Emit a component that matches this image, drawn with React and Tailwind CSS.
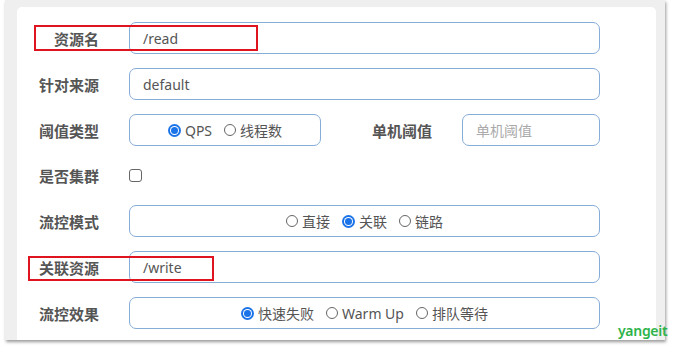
import React from 'react';

const fontStack = { fontFamily: '"Noto Sans", "Noto Sans CJK SC", sans-serif' };

function Radio({ checked, label }) {
  return (
    <span className="flex items-center gap-[4px]">
      {checked ? (
        <span className="w-[13px] h-[13px] rounded-full bg-[#1a73e8] flex items-center justify-center">
          <span className="w-[9px] h-[9px] rounded-full bg-white flex items-center justify-center">
            <span className="w-[7px] h-[7px] rounded-full bg-[#1a73e8]"></span>
          </span>
        </span>
      ) : (
        <span className="w-[12px] h-[12px] rounded-full border border-[#666] bg-white"></span>
      )}
      <span>{label}</span>
    </span>
  );
}

function Label({ children, className = '' }) {
  return (
    <div className={`text-right font-bold text-[15px] text-[#555] leading-none pt-[2px] ${className}`}>{children}</div>
  );
}

function Box({ children, className = '' }) {
  return (
    <div className={`h-[32px] rounded-[7px] border border-[#86acd8] bg-white flex items-center text-[14px] text-[#555] ${className}`}>
      {children}
    </div>
  );
}

export default function App() {
  return (
    <div className="w-[673px] h-[350px] bg-white relative overflow-hidden" style={fontStack}>
      <div className="ml-[5px] w-[660px] h-[340px] bg-[#efefef] pl-[12px] pr-[9px] pt-[7px] shadow-[1px_2px_3px_rgba(0,0,0,0.4)]">
        <div className="h-full bg-white rounded-t-[5px] pt-[15px]">
          <div className="flex flex-col gap-[14px]">
            {/* 资源名 */}
            <div className="flex items-center">
              <Label className="w-[82px]">资源名</Label>
              <Box className="ml-[30px] w-[471px] px-[13px]">/read</Box>
            </div>
            {/* 针对来源 */}
            <div className="flex items-center">
              <Label className="w-[82px]">针对来源</Label>
              <Box className="ml-[30px] w-[471px] px-[13px]">default</Box>
            </div>
            {/* 阈值类型 */}
            <div className="flex items-center">
              <Label className="w-[82px]">阈值类型</Label>
              <Box className="ml-[30px] w-[192px] justify-center gap-[12px] text-[14.5px]">
                <Radio checked label="QPS" />
                <Radio label="线程数" />
              </Box>
              <Label className="w-[111px]">单机阈值</Label>
              <Box className="ml-[30px] w-[138px] px-[13px] text-[#aaa]">单机阈值</Box>
            </div>
            {/* 是否集群 */}
            <div className="flex items-center h-[31px]">
              <Label className="w-[82px]">是否集群</Label>
              <span className="ml-[30px] w-[13px] h-[13px] rounded-[3px] border border-[#666] bg-white"></span>
            </div>
            {/* 流控模式 */}
            <div className="flex items-center">
              <Label className="w-[82px]">流控模式</Label>
              <Box className="ml-[30px] w-[471px] justify-center gap-[12px] text-[14.5px]">
                <Radio label="直接" />
                <Radio checked label="关联" />
                <Radio label="链路" />
              </Box>
            </div>
            {/* 关联资源 */}
            <div className="flex items-center">
              <Label className="w-[82px]">关联资源</Label>
              <Box className="ml-[30px] w-[471px] px-[13px]">/write</Box>
            </div>
            {/* 流控效果 */}
            <div className="flex items-center">
              <Label className="w-[82px]">流控效果</Label>
              <Box className="ml-[30px] w-[471px] justify-center gap-[12px] text-[14.5px]">
                <Radio checked label="快速失败" />
                <Radio label="Warm Up" />
                <Radio label="排队等待" />
              </Box>
            </div>
          </div>
        </div>
      </div>

      {/* highlight boxes */}
      <div className="absolute left-[34px] top-[25px] w-[224px] h-[26px] border-2 border-[#e0141e]"></div>
      <div className="absolute left-[28px] top-[256px] w-[186px] h-[25px] border-2 border-[#e0141e]"></div>

      {/* watermark */}
      <div className="absolute left-[618px] top-[324px] text-[14px] font-semibold text-[#2cb34a] leading-none tracking-[-0.3px]">yangeit</div>
    </div>
  );
}
